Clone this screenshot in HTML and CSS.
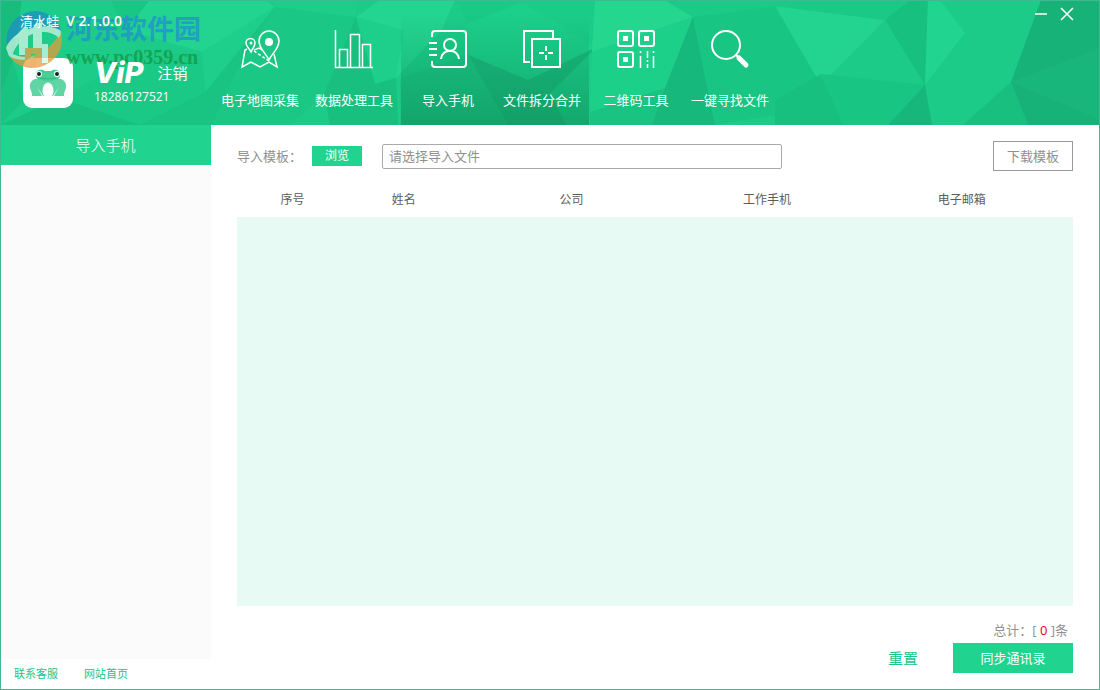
FILE: index.html
```html
<!DOCTYPE html>
<html lang="zh-CN">
<head>
<meta charset="utf-8">
<meta name="viewport" content="width=device-width, initial-scale=1">
<title>清水蛙</title>
<link rel="stylesheet" href="styles.css">
</head>
<body>
<div class="window">
  <header class="header">
    <svg class="facets" viewBox="0 0 1100 125" preserveAspectRatio="none" aria-hidden="true">
      <rect width="1100" height="125" fill="#1bcb87"/>
      <path d="M0 0H22L13 62 0 95Z" fill="#18bd7e"/>
      <path d="M0 95L13 62 24 100 0 125Z" fill="#19c382"/>
      <path d="M0 125L60 98 140 125Z" fill="#18bf7f"/>
      <path d="M22 0H110L140 55 60 98 13 62Z" fill="#1ccc88"/>
      <path d="M110 0H150L126 30Z" fill="#19c784"/>
      <path d="M150 0H265L275 7 202 52 126 30Z" fill="#22d48f"/>
      <path d="M140 55L202 52 205 92 140 125 60 98Z" fill="#1bc986"/>
      <path d="M140 125L205 92 275 7 232 80 212 125Z" fill="#19c382"/>
      <path d="M202 52L275 7 205 92Z" fill="#1dcf8a"/>
      <path d="M275 7L356 17 324 94 290 125H212L232 80Z" fill="#1ac784"/>
      <path d="M356 17L324 94 330 125H398L396 78Z" fill="#18bf7f"/>
      <path d="M275 0H356V17L275 7Z" fill="#1dcd89"/>
      <path d="M356 17L380 0H455L442 30 396 78Z" fill="#23d590"/>
      <path d="M356 17L404 30 396 78 375 84Z" fill="#1dcf8a"/>
      <path d="M455 0H595L597 47 528 80 468 55 442 30Z" fill="#1bcc88"/>
      <path d="M455 0H523L468 23Z" fill="#1ac985"/>
      <path d="M468 23L523 3 597 47 528 80 468 55Z" fill="#1ccf8a"/>
      <path d="M468 55L528 80 597 47 550 93 566 125H508Z" fill="#18b67a"/>
      <path d="M400 78L468 55 508 125H400Z" fill="#1ac483"/>
      <path d="M595 0H665L693 17 592 52Z" fill="#25d68f"/>
      <path d="M592 52L693 17 665 88 590 112Z" fill="#1dd08a"/>
      <path d="M590 112L665 88 652 125H590Z" fill="#19c382"/>
      <path d="M693 17L715 125H652L665 88Z" fill="#17b87c"/>
      <path d="M693 17L775 6 821 85 775 115 715 125Z" fill="#19c583"/>
      <path d="M665 0H775V6L693 17Z" fill="#1bca86"/>
      <path d="M775 6L885 20 821 85Z" fill="#22d48f"/>
      <path d="M775 0H910L885 20 775 6Z" fill="#1bc986"/>
      <path d="M910 0H928L925 85 885 20Z" fill="#18c080"/>
      <path d="M821 74L925 85 888 125H843Z" fill="#19c583"/>
      <path d="M821 74L843 125H775V100Z" fill="#18c080"/>
      <path d="M925 85L932 125H888Z" fill="#17b67a"/>
      <path d="M928 0H940L965 33 925 85Z" fill="#21d48f"/>
      <path d="M1011 82L1028 125H963Z" fill="#18bf7f"/>
      <path d="M1041 0H1100V125H1028L1011 82Z" fill="#17b277"/>
      <path d="M1011 82L1100 48V120Z" fill="#18b67a"/>
    </svg>

    <div class="brand">
      <div class="watermark" aria-hidden="true">
        <svg class="watermark-logo" viewBox="0 0 58 58">
          <path d="M2 34C-1 16 12 1 30 0c12 0 23 8 26 19L30 22Z" fill="#1e8fc4"/>
          <path d="M56 20c5 20-9 37-30 37C15 56 7 51 3 43 27 50 46 40 56 20Z" fill="#e59b3b"/>
          <path d="M1 37C8 20 34 10 55 19c2 3 0 6-1 8C40 14 14 24 8 43c8 4 17 4 23 2-9 5-19 5-27 0Z" fill="#cdf3e4"/>
          <path d="M14 44V27l-6 1 11-12h4v28ZM28 41V22l-5 1 9-11h5v29Z" fill="#d6f7e9"/>
          <path d="M20 37h17v18h-6V43h-5v12h-6Z" fill="#e8a04a"/>
          <path d="M37 33h6v19h-6Z" fill="#d6f7e9"/>
        </svg>
        <div class="watermark-text">
          <div class="watermark-name">河东软件园</div>
          <div class="watermark-url">www.pc0359.cn</div>
        </div>
      </div>
      <div class="app-title">清水蛙 <b>&nbsp;V 2.1.0.0</b></div>
      <div class="account">
        <svg class="avatar" viewBox="0 0 50 50" role="img" aria-label="清水蛙">
          <rect width="50" height="50" rx="9" fill="#fff"/>
          <path d="M15 21C10 20 6 25 7 30c1 3 2 4 2 8h10l-5-9 6 9h10l6-9-5 9h10c0-4 1-5 2-8 1-5-3-10-8-9Z" fill="#5fd5a5"/>
          <path d="M13 16c0-5 7-5 9-3h6c2-2 9-2 9 3 1 5-4 7-12 7s-13-2-12-7Z" fill="#48cf98"/>
          <path d="M17 20q8 2 16 0" fill="none" stroke="#35b783"/>
          <path d="M21 27q4-5 8 0c2 4 2 8 0 11h-8c-2-3-2-7 0-11Z" fill="#fff"/>
          <circle cx="16" cy="16" r="3" fill="#fff"/><circle cx="34" cy="16" r="3" fill="#fff"/>
          <circle cx="16" cy="16" r="2" fill="#17231f"/><circle cx="34" cy="16" r="2" fill="#17231f"/>
        </svg>
        <div class="account-info">
          <div class="account-row"><span class="vip">ViP</span><a class="logout" href="#">注销</a></div>
          <div class="phone">18286127521</div>
        </div>
      </div>
    </div>

    <nav class="nav">
      <button class="nav-item" type="button">
        <svg class="nav-icon" viewBox="0 0 40 40">
          <path d="M7 20 5 21 2 38l9-5 9 5 9-5 8 5-3-13M14 21l5-2 3 2"/>
          <path d="M11 23c-2-4-5-6-5-9a4.500 4.500 0 0 1 9 0c0 3-2 5-4 9Z"/>
          <path d="M29 31c-3-7-10-11-10-19a10 10 0 0 1 20 0c0 8-7 12-10 19Z"/>
          <path d="M14 22l15 10" stroke-dasharray="3 2"/>
          <circle class="solid" cx="29" cy="13" r="4"/><circle class="solid" cx="11" cy="14" r="1.500"/>
        </svg>
        <span>电子地图采集</span>
      </button>
      <button class="nav-item" type="button">
        <svg class="nav-icon" viewBox="0 0 40 40">
          <path d="M1.500 1V38.500H39M5.500 38V20.500H13.500V38M16.500 38V5.500H25.500V38M28.500 38V15.500H36.500V38"/>
        </svg>
        <span>数据处理工具</span>
      </button>
      <button class="nav-item active" type="button">
        <svg class="nav-icon bold" viewBox="0 0 40 40">
          <path d="M4 8V5Q4 2 7 2H35Q38 2 38 5V35Q38 38 35 38H7Q4 38 4 35V32M1 14H9M1 20H9M1 26H9"/>
          <circle cx="22" cy="16" r="6"/><path d="M13 30c1-11 17-11 18 0"/>
        </svg>
        <span>导入手机</span>
      </button>
      <button class="nav-item active" type="button">
        <svg class="nav-icon bold" viewBox="0 0 40 40">
          <path d="M31 9V2H2V33H8M10 10H38V38H10ZM24 17V22M24 26V31M17 24H22M26 24H31"/>
        </svg>
        <span>文件拆分合并</span>
      </button>
      <button class="nav-item" type="button">
        <svg class="nav-icon bold" viewBox="0 0 40 40">
          <rect x="2" y="2" width="15" height="15" rx="2"/><rect x="23" y="2" width="15" height="15" rx="2"/><rect x="2" y="23" width="15" height="15" rx="2"/>
          <path class="solid" d="M7 7h5v5H7ZM28 7h5v5h-5ZM7 28h5v5H7Z"/>
          <path class="thin" d="M24.500 22V24M24.500 27V39M31.500 22V29M31.500 31V33M31.500 35V39M37.500 22V24M37.500 27V39"/>
        </svg>
        <span>二维码工具</span>
      </button>
      <button class="nav-item" type="button">
        <svg class="nav-icon bold" viewBox="0 0 40 40">
          <circle cx="16" cy="16" r="14"/><path d="M26 26l3 3"/><path d="M29 29l7 7" stroke-width="5" stroke-linecap="round"/>
        </svg>
        <span>一键寻找文件</span>
      </button>
    </nav>

    <div class="window-controls">
      <button type="button" aria-label="最小化"><svg viewBox="0 0 14 14"><path d="M1 7H13"/></svg></button>
      <button type="button" aria-label="关闭"><svg viewBox="0 0 14 14"><path d="M1 1 13 13M13 1 1 13"/></svg></button>
    </div>
  </header>

  <div class="body">
    <aside class="sidebar">
      <h1 class="sidebar-title">导入手机</h1>
      <div class="sidebar-list"></div>
      <div class="sidebar-links"><a href="#">联系客服</a><a href="#">网站首页</a></div>
    </aside>

    <main class="main">
      <div class="toolbar">
        <label for="template">导入模板<span class="colon">：</span></label>
        <button class="browse" type="button">浏览</button>
        <input class="file-path" id="template" type="text" placeholder="请选择导入文件">
        <button class="download" type="button">下载模板</button>
      </div>
      <div class="table-area">
        <table class="contacts">
          <colgroup><col class="col-index"><col class="col-name"><col class="col-company"><col class="col-phone"><col class="col-mail"></colgroup>
          <thead><tr><th>序号</th><th>姓名</th><th>公司</th><th>工作手机</th><th>电子邮箱</th></tr></thead>
          <tbody></tbody>
        </table>
      </div>
      <div class="summary">总计<span class="colon">：</span>[ <span class="count">0</span> ]条</div>
      <div class="actions">
        <a class="reset" href="#">重置</a>
        <button class="sync" type="button">同步通讯录</button>
      </div>
    </main>
  </div>
</div>
</body>
</html>
```
FILE: styles.css
```css
* {
  box-sizing: border-box;
}

body {
  margin: 0;
  font-family: "Open Sans", "Noto Sans CJK SC", sans-serif;
  font-size: 13px;
  line-height: 20px;
  color: #909090;
}

button,
input {
  font: inherit;
  margin: 0;
}

button {
  border: 0;
  padding: 0;
  cursor: pointer;
}

a {
  text-decoration: none;
}

.window {
  position: relative;
  display: flex;
  flex-direction: column;
  min-height: 100vh;
  background: #fff;
}

.window::after {
  content: "";
  position: absolute;
  inset: 0;
  border: 1px solid #3fba90;
  pointer-events: none;
}

/* Header */

.header {
  position: relative;
  display: flex;
  height: 125px;
  color: #fff;
}

.facets {
  position: absolute;
  inset: 0;
  width: 100%;
  height: 100%;
}

.brand {
  position: relative;
  width: 213px;
  padding: 11px 0 0 20px;
}

.app-title {
  position: relative;
}

.app-title b {
  font-size: 14px;
  font-weight: 600;
}

.account {
  display: flex;
  gap: 21px;
  padding: 27px 0 0 3px;
}

.avatar {
  width: 50px;
  height: 50px;
}

.account-info {
  position: relative;
}

.account-row {
  display: flex;
  align-items: center;
  gap: 14px;
  height: 30px;
}

.vip {
  font-family: Inter, sans-serif;
  font-size: 29px;
  font-style: italic;
  font-weight: 800;
}

.logout {
  color: #fff;
  font-size: 15px;
}

.phone {
  font-size: 12px;
  line-height: 18px;
}

.watermark {
  position: absolute;
  z-index: 1;
  top: 11px;
  left: 5px;
  display: flex;
  gap: 3px;
  opacity: 0.75;
  pointer-events: none;
}

.app-title,
.account-info {
  z-index: 2;
}

.watermark-logo {
  width: 58px;
  height: 58px;
}

.watermark-name {
  color: #2090d0;
  font-size: 27px;
  font-weight: 700;
  line-height: 36px;
}

.watermark-url {
  color: #129743;
  font-family: "Liberation Serif", serif;
  font-size: 20px;
  font-weight: 700;
  line-height: 20px;
}

.nav {
  position: relative;
  display: flex;
}

.nav-item {
  display: flex;
  flex-direction: column;
  align-items: center;
  gap: 21px;
  width: 94px;
  padding-top: 29px;
  background: none;
  color: #fff;
  white-space: nowrap;
}

.nav-item.active {
  background: linear-gradient(rgba(14, 145, 92, 0) 10%, rgba(14, 145, 92, 0.6));
}

.nav-icon {
  width: 40px;
  height: 40px;
  fill: none;
  stroke: #fff;
  stroke-width: 1.5;
}

.nav-icon.bold {
  stroke-width: 2;
}

.nav-icon .thin {
  stroke-width: 1.5;
}

.nav-icon .solid {
  fill: #fff;
  stroke: none;
}

.window-controls {
  position: relative;
  display: flex;
  gap: 12px;
  margin-left: auto;
  padding: 7px 26px 0 0;
}

.window-controls button {
  width: 14px;
  height: 14px;
  background: none;
}

.window-controls svg {
  display: block;
  fill: none;
  stroke: #fff;
  stroke-width: 1.5;
}

/* Body */

.body {
  display: flex;
  flex: 1;
}

.sidebar {
  display: flex;
  flex-direction: column;
  width: 211px;
}

.sidebar-title {
  margin: 0;
  background: #20d48f;
  color: #fff;
  font-size: 15px;
  font-weight: 300;
  line-height: 40px;
  text-align: center;
}

.sidebar-list {
  flex: 1;
  background: #fbfbfb;
}

.sidebar-links {
  display: flex;
  gap: 26px;
  padding: 5px 14px 6px;
  font-size: 11px;
}

.sidebar-links a {
  color: #20c488;
}

.main {
  display: flex;
  flex: 1;
  flex-direction: column;
  min-width: 0;
  padding: 16px 27px 17px 26px;
}

.toolbar {
  display: flex;
  align-items: center;
  height: 30px;
}

.colon {
  font-family: "Noto Sans CJK TC", sans-serif;
}

.browse {
  width: 50px;
  height: 20px;
  margin-left: 10px;
  background: #20d48f;
  color: #fff;
  font-size: 12px;
}

.file-path {
  width: 400px;
  height: 25px;
  margin-left: 20px;
  padding: 0 6px;
  border: 1px solid #aaa;
  border-radius: 2px;
  color: #666;
}

.file-path::placeholder {
  color: #909090;
}

.download {
  width: 80px;
  height: 30px;
  margin-left: auto;
  border: 1px solid #999;
  background: #fff;
  color: #909090;
}

.table-area {
  flex: 1;
  margin-top: 11px;
  background: #e7faf4;
}

.contacts {
  width: 100%;
  table-layout: fixed;
  border-collapse: collapse;
}

.contacts th {
  height: 35px;
  padding: 0;
  background: #fff;
  color: #5c5c5c;
  font-size: 12px;
  font-weight: 400;
}

.col-index,
.col-name {
  width: 13.3%;
}

.col-company {
  width: 26.8%;
}

.col-phone {
  width: 20%;
}

.summary {
  margin-top: 14px;
  padding: 0 5px 3px 0;
  text-align: right;
}

.count {
  color: #e60012;
}

.actions {
  display: flex;
  align-items: center;
  justify-content: flex-end;
  gap: 35px;
}

.reset {
  color: #20c488;
  font-size: 15px;
}

.sync {
  width: 120px;
  height: 30px;
  background: #20d48f;
  color: #fff;
}
```
